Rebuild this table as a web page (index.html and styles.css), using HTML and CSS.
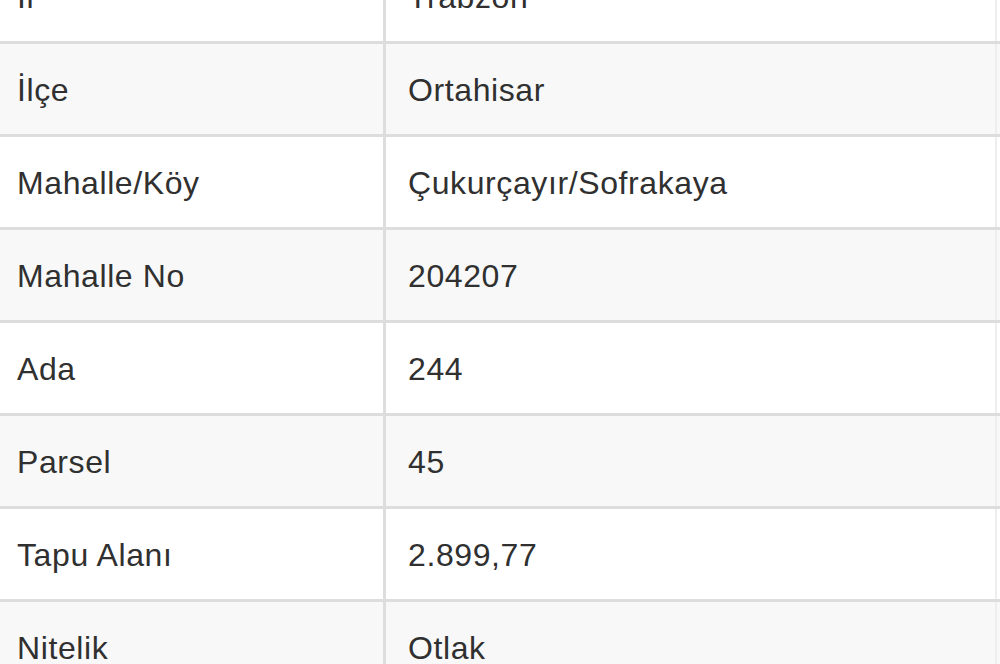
FILE: index.html
```html
<!DOCTYPE html>
<html lang="tr">
<head>
<meta charset="utf-8">
<link rel="stylesheet" href="styles.css">
</head>
<body>
<div class="viewport">
  <div class="table">
    <div class="row odd"><div class="cell key">İl</div><div class="cell val">Trabzon</div></div>
    <div class="row even"><div class="cell key">İlçe</div><div class="cell val">Ortahisar</div></div>
    <div class="row odd"><div class="cell key">Mahalle/Köy</div><div class="cell val">Çukurçayır/Sofrakaya</div></div>
    <div class="row even"><div class="cell key">Mahalle No</div><div class="cell val">204207</div></div>
    <div class="row odd"><div class="cell key">Ada</div><div class="cell val">244</div></div>
    <div class="row even"><div class="cell key">Parsel</div><div class="cell val">45</div></div>
    <div class="row odd"><div class="cell key">Tapu Alanı</div><div class="cell val">2.899,77</div></div>
    <div class="row even"><div class="cell key">Nitelik</div><div class="cell val">Otlak</div></div>
  </div>
</div>
</body>
</html>
```

FILE: styles.css
```css
html, body {
  margin: 0;
  padding: 0;
  background: #ffffff;
}
.viewport {
  width: 1000px;
  height: 664px;
  overflow: hidden;
}
.table {
  margin-top: -49px;
  width: 1000px;
  font-family: "Liberation Sans", Arial, sans-serif;
  font-size: 32px;
  letter-spacing: 0.6px;
  color: #303030;
}
.row {
  display: flex;
  height: 93px;
  box-sizing: border-box;
  border-bottom: 3px solid #dddddd;
}
.row.odd { background: #ffffff; }
.row.even { background: #f8f8f8; }
.cell {
  display: flex;
  align-items: center;
  box-sizing: border-box;
  padding-top: 2px;
}
.key {
  width: 386px;
  padding-left: 17px;
  border-right: 3px solid #dddddd;
}
.val {
  flex: 1;
  padding-left: 22px;
  margin-right: 3px;
  border-right: 2px solid #eeeeee;
}
```
